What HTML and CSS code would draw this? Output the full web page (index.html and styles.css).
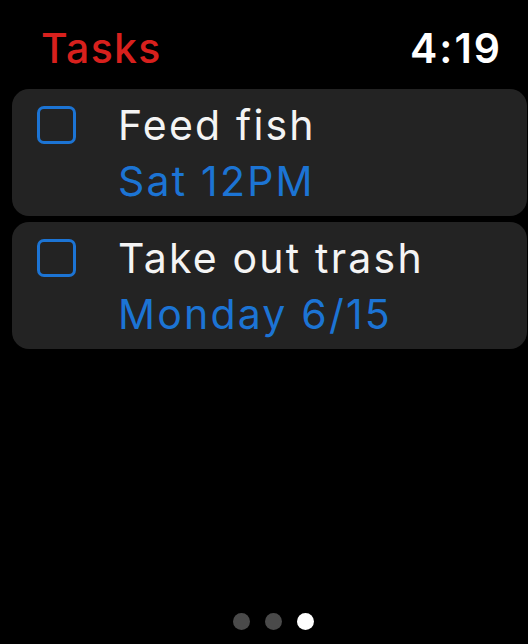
FILE: index.html
```html
<!DOCTYPE html>
<html>
<head>
<meta charset="utf-8">
<link rel="stylesheet" href="styles.css">
</head>
<body>
<div class="screen">
  <header class="header">
    <span class="title">Tasks</span>
    <span class="time">4:19</span>
  </header>
  <div class="list">
    <div class="card">
      <div class="check"></div>
      <div class="text">
        <div class="name">Feed fish</div>
        <div class="date">Sat 12PM</div>
      </div>
    </div>
    <div class="card">
      <div class="check"></div>
      <div class="text">
        <div class="name">Take out trash</div>
        <div class="date">Monday 6/15</div>
      </div>
    </div>
  </div>
  <div class="dots">
    <span class="dot"></span>
    <span class="dot"></span>
    <span class="dot active"></span>
  </div>
</div>
</body>
</html>
```
FILE: styles.css
```css
html, body {
  margin: 0;
  padding: 0;
  background: #000;
}
.screen {
  width: 528px;
  height: 644px;
  display: flex;
  flex-direction: column;
  font-family: Inter, "Noto Sans", sans-serif;
  color: #fff;
  box-sizing: border-box;
}
.header {
  display: flex;
  justify-content: space-between;
  align-items: baseline;
  padding: 23px 26px 16px 41px;
  font-size: 41px;
  line-height: 50px;
}
.title {
  color: #d8201d;
  font-weight: 500;
  letter-spacing: 1.3px;
}
.time {
  color: #fff;
  font-weight: 600;
  letter-spacing: 2px;
}
.list {
  display: flex;
  flex-direction: column;
  gap: 6px;
  padding: 0 1px 0 12px;
}
.card {
  background: #232323;
  border-radius: 17px;
  display: flex;
  align-items: flex-start;
  padding: 8px 0 7px 25px;
}
.check {
  width: 39px;
  height: 38px;
  box-sizing: border-box;
  border: 3px solid #1c74d4;
  border-radius: 7px;
  margin-top: 9px;
  flex: none;
}
.text {
  margin-left: 42px;
  font-size: 41px;
  line-height: 56px;
  letter-spacing: 2.2px;
}
.name {
  color: #f4f4f4;
}
.date {
  color: #1c74d4;
}
.dots {
  margin-top: auto;
  display: flex;
  justify-content: center;
  gap: 15px;
  padding: 0 0 14px 18px;
}
.dot {
  width: 17px;
  height: 17px;
  border-radius: 50%;
  background: #4a4a4a;
}
.dot.active {
  background: #fff;
}
```
